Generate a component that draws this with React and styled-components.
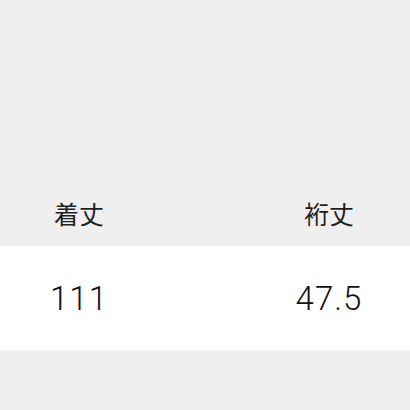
import React from 'react'
import { styled, createGlobalStyle } from 'styled-components'

const GlobalStyle = createGlobalStyle`
*{
  margin: 0;
  padding: 0;
  box-sizing: border-box;
}
html, body{
  background-color: #efefef;
  font-family: Roboto, "Noto Sans CJK JP", sans-serif;
  color: #1a1a1a;
}
`

const Page = styled.div`
width: 410px;
height: 410px;
padding-top: 181px;
`

const Row = styled.div`
display: flex;
justify-content: space-between;
align-items: center;
height: ${({$head}) => $head ? '65px' : '104px'};
padding: 0 27px 0 25px;
background-color: ${({$head}) => $head ? 'transparent' : '#fff'};
`

const Cell = styled.div`
width: 108px;
text-align: center;
font-size: ${({$head}) => $head ? '25px' : '33px'};
font-family: ${({$head}) => $head ? '"Noto Sans CJK JP", sans-serif' : 'Roboto, "Liberation Sans", sans-serif'};
font-weight: ${({$head}) => $head ? 400 : 300};
color: ${({$head}) => $head ? '#1f1f1f' : '#111'};
letter-spacing: ${({$head}) => $head ? '0' : '1px'};
line-height: 1;
`

const sizes = [
  { label: '着丈', value: '111' },
  { label: '裄丈', value: '47.5' },
]

const App = () => {
  return (
    <Page>
      <GlobalStyle />
      <Row $head>
        {sizes.map(({label}) => <Cell $head key={label}>{label}</Cell>)}
      </Row>
      <Row>
        {sizes.map(({label, value}) => <Cell key={label}>{value}</Cell>)}
      </Row>
    </Page>
  )
}

export default App
